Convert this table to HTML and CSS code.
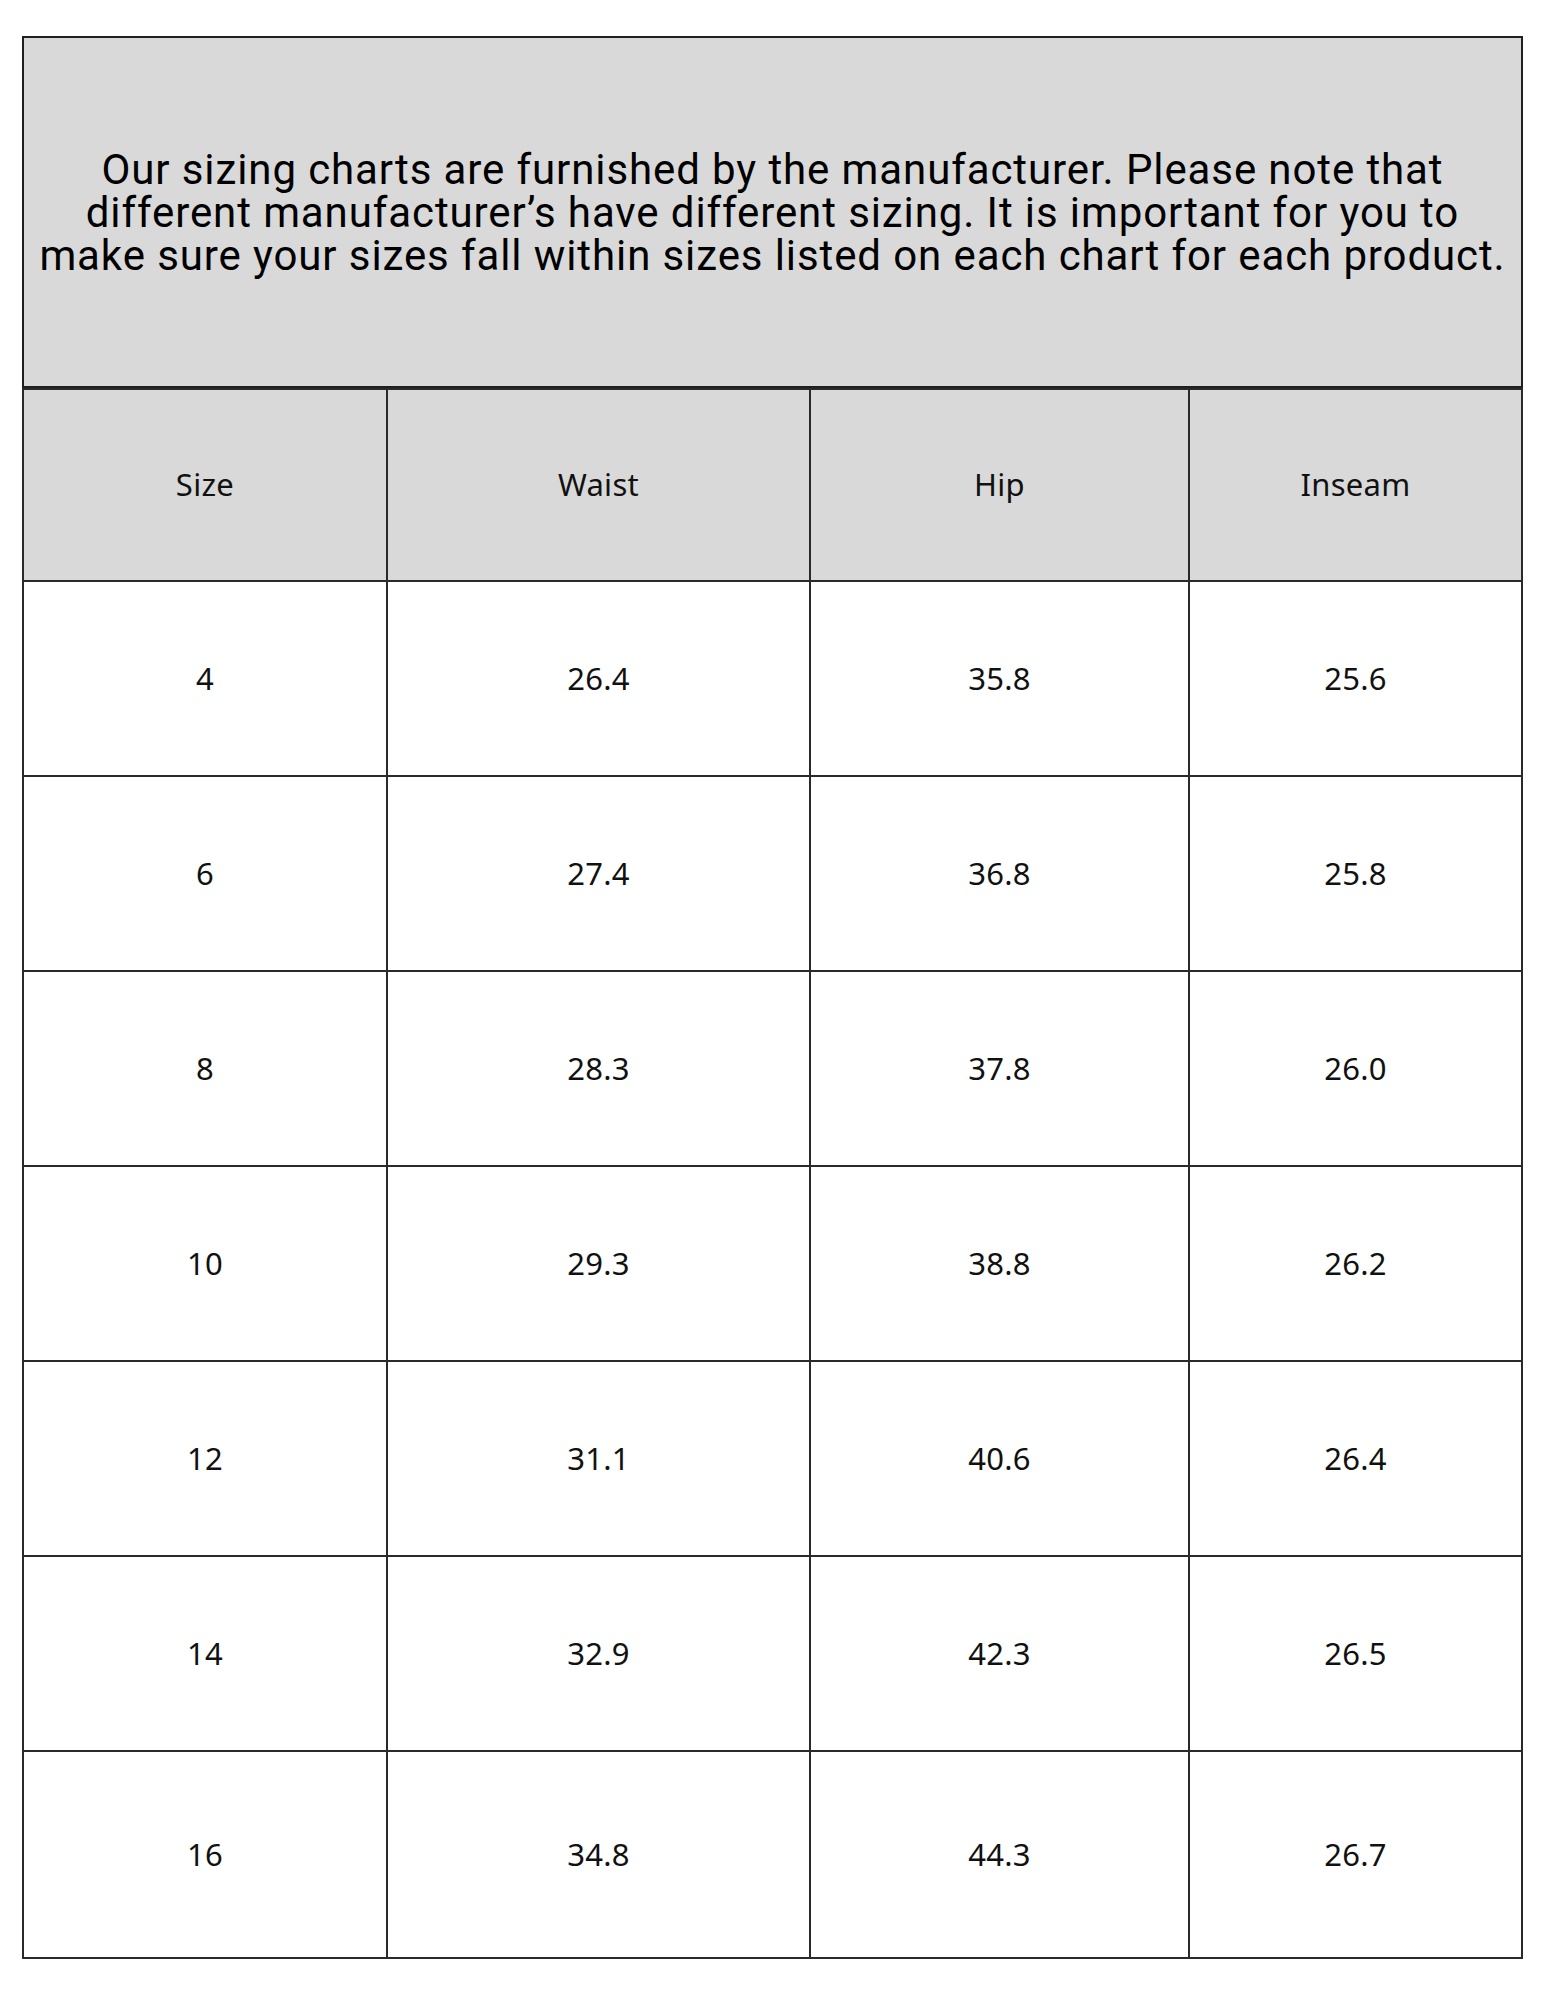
FILE: index.html
```html
<!DOCTYPE html>
<html lang="en">
<head>
<meta charset="utf-8">
<title>Size Chart</title>
<link rel="stylesheet" href="styles.css">
</head>
<body>
<main class="chart">
  <section class="notice">
    <p class="notice-text">Our sizing charts are furnished by the manufacturer. Please note that<br>different manufacturer’s have different sizing. It is important for you to<br>make sure your sizes fall within sizes listed on each chart for each product.</p>
  </section>
  <section class="grid">
    <div class="cell head">Size</div>
    <div class="cell head">Waist</div>
    <div class="cell head">Hip</div>
    <div class="cell head">Inseam</div>

    <div class="cell">4</div><div class="cell">26.4</div><div class="cell">35.8</div><div class="cell">25.6</div>
    <div class="cell">6</div><div class="cell">27.4</div><div class="cell">36.8</div><div class="cell">25.8</div>
    <div class="cell">8</div><div class="cell">28.3</div><div class="cell">37.8</div><div class="cell">26.0</div>
    <div class="cell">10</div><div class="cell">29.3</div><div class="cell">38.8</div><div class="cell">26.2</div>
    <div class="cell">12</div><div class="cell">31.1</div><div class="cell">40.6</div><div class="cell">26.4</div>
    <div class="cell">14</div><div class="cell">32.9</div><div class="cell">42.3</div><div class="cell">26.5</div>
    <div class="cell">16</div><div class="cell">34.8</div><div class="cell">44.3</div><div class="cell">26.7</div>
  </section>
</main>
</body>
</html>
```

FILE: styles.css
```css
html, body {
  margin: 0;
  padding: 0;
  background: #ffffff;
}

.chart {
  width: 1501px;
  margin: 36px 0 0 22px;
  display: flex;
  flex-direction: column;
}

.notice {
  box-sizing: border-box;
  height: 352px;
  background: #d9d9d9;
  border: 2px solid #1f1f1f;
  display: flex;
  align-items: center;
  justify-content: center;
}

.notice-text {
  margin: 0;
  font-family: "Roboto", "Noto Sans", sans-serif;
  font-size: 42px;
  letter-spacing: 0.9px;
  line-height: 43px;
  color: #000;
  text-align: center;
  white-space: nowrap;
}

.grid {
  display: grid;
  grid-template-columns: 362px 421px 377px 331px;
  grid-template-rows: 190px repeat(6, 193px) 205px;
  gap: 2px;
  padding: 2px;
  background: #2a2a2a;
}

.cell {
  background: #ffffff;
  display: flex;
  align-items: center;
  justify-content: center;
  padding-bottom: 2px;
  font-family: "Noto Sans", "Open Sans", sans-serif;
  font-size: 31px;
  letter-spacing: 0.3px;
  color: #111;
}

.cell.head {
  background: #d9d9d9;
}
```
